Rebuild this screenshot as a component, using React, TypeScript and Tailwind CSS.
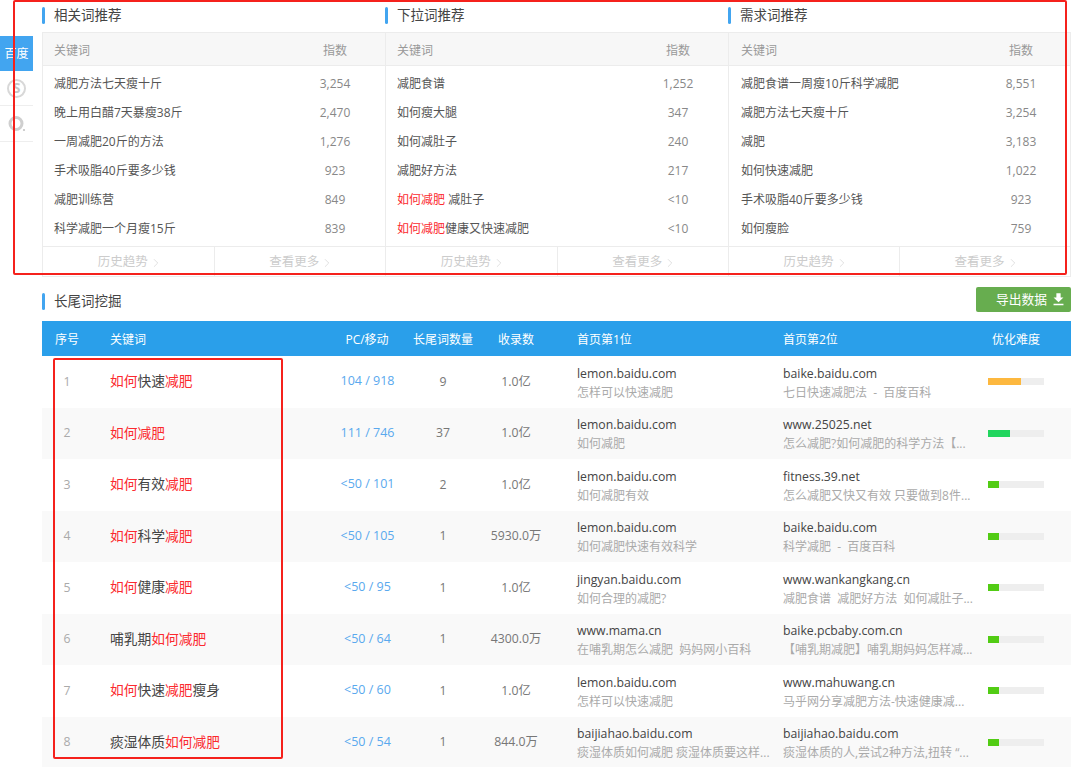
import { ChevronRight } from 'lucide-react'
import { MdFileDownload } from 'react-icons/md'

const FONT = "font-['Open_Sans','Noto_Sans_CJK_SC',sans-serif]"

type Word = { red?: string; text: string; value: string }

const panels: { title: string; words: Word[] }[] = [
  {
    title: '相关词推荐',
    words: [
      { text: '减肥方法七天瘦十斤', value: '3,254' },
      { text: '晚上用白醋7天暴瘦38斤', value: '2,470' },
      { text: '一周减肥20斤的方法', value: '1,276' },
      { text: '手术吸脂40斤要多少钱', value: '923' },
      { text: '减肥训练营', value: '849' },
      { text: '科学减肥一个月瘦15斤', value: '839' },
    ],
  },
  {
    title: '下拉词推荐',
    words: [
      { text: '减肥食谱', value: '1,252' },
      { text: '如何瘦大腿', value: '347' },
      { text: '如何减肚子', value: '240' },
      { text: '减肥好方法', value: '217' },
      { red: '如何减肥', text: ' 减肚子', value: '<10' },
      { red: '如何减肥', text: '健康又快速减肥', value: '<10' },
    ],
  },
  {
    title: '需求词推荐',
    words: [
      { text: '减肥食谱一周瘦10斤科学减肥', value: '8,551' },
      { text: '减肥方法七天瘦十斤', value: '3,254' },
      { text: '减肥', value: '3,183' },
      { text: '如何快速减肥', value: '1,022' },
      { text: '手术吸脂40斤要多少钱', value: '923' },
      { text: '如何瘦脸', value: '759' },
    ],
  },
]

const rows = [
  { kw: '如何快速减肥', pc: '104 / 918', n: '9', rec: '1.0亿', a: 'lemon.baidu.com', as: '怎样可以快速减肥', b: 'baike.baidu.com', bs: '七日快速减肥法  -  百度百科', bar: 'w-[33px] bg-[#fdb83f]' },
  { kw: '如何减肥', pc: '111 / 746', n: '37', rec: '1.0亿', a: 'lemon.baidu.com', as: '如何减肥', b: 'www.25025.net', bs: '怎么减肥?如何减肥的科学方法【...', bar: 'w-[22px] bg-[#22d65f]' },
  { kw: '如何有效减肥', pc: '<50 / 101', n: '2', rec: '1.0亿', a: 'lemon.baidu.com', as: '如何减肥有效', b: 'fitness.39.net', bs: '怎么减肥又快又有效 只要做到8件...', bar: 'w-[11px] bg-[#52cc14]' },
  { kw: '如何科学减肥', pc: '<50 / 105', n: '1', rec: '5930.0万', a: 'lemon.baidu.com', as: '如何减肥快速有效科学', b: 'baike.baidu.com', bs: '科学减肥  -  百度百科', bar: 'w-[11px] bg-[#52cc14]' },
  { kw: '如何健康减肥', pc: '<50 / 95', n: '1', rec: '1.0亿', a: 'jingyan.baidu.com', as: '如何合理的减肥?', b: 'www.wankangkang.cn', bs: '减肥食谱  减肥好方法  如何减肚子...', bar: 'w-[11px] bg-[#52cc14]' },
  { kw: '哺乳期如何减肥', pc: '<50 / 64', n: '1', rec: '4300.0万', a: 'www.mama.cn', as: '在哺乳期怎么减肥  妈妈网小百科', b: 'baike.pcbaby.com.cn', bs: '【哺乳期减肥】哺乳期妈妈怎样减...', bar: 'w-[11px] bg-[#52cc14]' },
  { kw: '如何快速减肥瘦身', pc: '<50 / 60', n: '1', rec: '1.0亿', a: 'lemon.baidu.com', as: '怎样可以快速减肥', b: 'www.mahuwang.cn', bs: '马乎网分享减肥方法-快速健康减...', bar: 'w-[11px] bg-[#52cc14]' },
  { kw: '痰湿体质如何减肥', pc: '<50 / 54', n: '1', rec: '844.0万', a: 'baijiahao.baidu.com', as: '痰湿体质如何减肥 痰湿体质要这样...', b: 'baijiahao.baidu.com', bs: '痰湿体质的人,尝试2种方法,扭转 “...', bar: 'w-[11px] bg-[#52cc14]' },
]

function Title({ children }: { children: string }) {
  return (
    <div className="flex items-center gap-[9px]">
      <span className="w-[3px] h-[17px] rounded-[2px] bg-[#42a5f0]" />
      <span className="text-[13.5px] text-[#444]">{children}</span>
    </div>
  )
}

function Highlight({ text }: { text: string }) {
  return (
    <>
      {text.split(/(如何|减肥)/).map((part, i) =>
        part === '如何' || part === '减肥' ? (
          <span key={i} className="text-[#fb2a2f]">
            {part}
          </span>
        ) : (
          part
        ),
      )}
    </>
  )
}

function Panel({ title, words, last }: { title: string; words: Word[]; last: boolean }) {
  const pad = last ? 'pl-[12px]' : 'pl-[11px]'
  const valueCol = last ? 'w-[98px]' : 'w-[100px]'
  return (
    <div className="w-[343px]">
      <div className="h-[32px] flex items-center pb-[1px]">
        <Title>{title}</Title>
      </div>
      <div className={`border-l border-t border-[#ececec] ${last ? 'border-r' : ''}`}>
        <div className="h-[33px] flex items-center justify-between pt-[3px] bg-[#f7f7f7] border-b border-[#ececec] text-[12px] text-[#999]">
          <span className={pad}>关键词</span>
          <span className={`${valueCol} text-center`}>指数</span>
        </div>
        <div className="h-[180px] pt-[3px]">
          {words.map((w) => (
            <div key={w.text} className="h-[29px] flex items-center justify-between text-[12px] text-[#555]">
              <span className={`${pad} whitespace-pre`}>
                {w.red && <span className="text-[#fb2a2f]">{w.red}</span>}
                {w.text}
              </span>
              <span className={`${valueCol} text-center text-[#888]`}>{w.value}</span>
            </div>
          ))}
        </div>
        <div className="h-[31px] flex border-t border-b border-[#ececec] text-[12.5px] text-[#ccc]">
          {['历史趋势', '查看更多'].map((label, i) => (
            <div key={label} className={`flex-1 flex items-center justify-center pl-[4px] pt-[2px] ${i === 0 ? 'border-r border-[#ececec]' : ''}`}>
              {label}
              <ChevronRight size={14} strokeWidth={1} className="ml-[1px]" />
            </div>
          ))}
        </div>
      </div>
    </div>
  )
}

export default function App() {
  return (
    <div className={`${FONT} relative w-[1080px] h-[767px] overflow-hidden bg-white flex`}>
      <aside className="w-[33px] pt-[36px] shrink-0">
        <div className="h-[35px] flex items-center justify-center bg-[#42a5f0] text-white text-[12px]">百度</div>
        <div className="h-[35px] flex items-center justify-center border-b border-[#eee]">
          <span className="w-[19px] h-[19px] rounded-full border-2 border-[#d8d8d8] flex items-center justify-center text-[14px] font-bold leading-none text-[#c8c8c8]">
            S
          </span>
        </div>
        <div className="h-[36px] flex items-center justify-center border-b border-[#eee]">
          <svg width="20" height="20" viewBox="0 0 20 20" fill="none">
            <circle cx="9" cy="9.5" r="6" stroke="#cfcfcf" strokeWidth="3" />
            <circle cx="17" cy="16" r="1.1" fill="#c4c4c4" />
          </svg>
        </div>
      </aside>

      <main className="ml-[9px] w-[1029px]">
        <div className="flex h-[276px]">
          {panels.map((p, i) => (
            <Panel key={p.title} title={p.title} words={p.words} last={i === 2} />
          ))}
        </div>

        <div className="h-[45px] flex items-start justify-between pt-[11px]">
          <div className="pt-[4px]">
            <Title>长尾词挖掘</Title>
          </div>
          <button className="w-[95px] h-[25px] flex items-center pl-[20px] gap-[3px] rounded-[2px] bg-[#67ad4f] text-white text-[12.75px]">
            导出数据
            <MdFileDownload size={17} />
          </button>
        </div>

        <div className="h-[35px] flex items-center pt-[2px] bg-[#2a9fea] text-white text-[12px]">
          <span className="w-[50px] text-center">序号</span>
          <span className="w-[230px] pl-[18px]">关键词</span>
          <span className="w-[90px] text-center">PC/移动</span>
          <span className="w-[62px] text-center">长尾词数量</span>
          <span className="w-[84px] text-center">收录数</span>
          <span className="w-[210px] pl-[19px]">首页第1位</span>
          <span className="w-[205px] pl-[15px]">首页第2位</span>
          <span className="w-[71px] pl-[19px]">优化难度</span>
        </div>

        {rows.map((r, i) => (
          <div key={r.kw} className={`h-[51.5px] flex items-center text-[12.25px] ${i % 2 ? 'bg-[#f9f9f9]' : 'bg-white'}`}>
            <span className="w-[50px] text-center text-[#aaa]">{i + 1}</span>
            <span className="w-[230px] pl-[18px] text-[13.75px] text-[#444]">
              <Highlight text={r.kw} />
            </span>
            <span className="w-[90px] pl-[1px] text-center text-[12.5px] text-[#5aa9ee]">{r.pc}</span>
            <span className="w-[62px] text-center text-[#777]">{r.n}</span>
            <span className="w-[84px] text-center text-[#777]">{r.rec}</span>
            <div className="w-[210px] pl-[19px] pt-[2px] leading-[19px]">
              <div className="text-[#444]">{r.a}</div>
              <div className="text-[12px] text-[#aaa] whitespace-pre">{r.as}</div>
            </div>
            <div className="w-[205px] pl-[15px] pt-[2px] leading-[19px]">
              <div className="text-[#444]">{r.b}</div>
              <div className="text-[12px] text-[#aaa] whitespace-pre">{r.bs}</div>
            </div>
            <div className="w-[71px] pl-[15px]">
              <div className="w-[56px] h-[7px] bg-[#eee]">
                <div className={`h-full ${r.bar}`} />
              </div>
            </div>
          </div>
        ))}
      </main>

      {/* red annotation boxes drawn over the screenshot */}
      <div className="absolute left-[13px] top-0 w-[1054px] h-[275px] border-[2.5px] border-[#f5211c] rounded-[2px] pointer-events-none" />
      <div className="absolute left-[53px] top-[358px] w-[230px] h-[401px] border-[2.5px] border-[#f5211c] rounded-[2px] pointer-events-none" />
    </div>
  )
}
